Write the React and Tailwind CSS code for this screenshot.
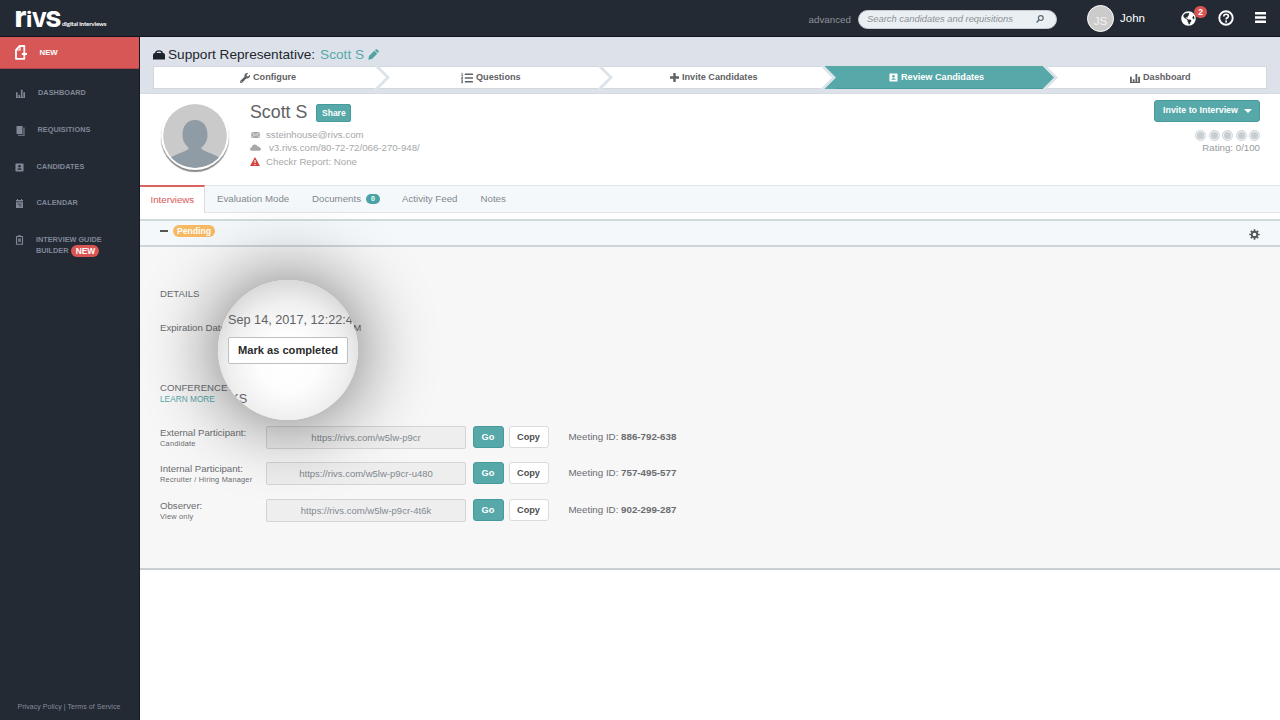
import { FaWrench, FaListOl, FaGlobeAmericas } from 'react-icons/fa';

function ChartIcon({ className }) {
  return (
    <svg viewBox="0 0 11 11" className={className} fill="currentColor">
      <path d="M0 4h2v6H0zM3 7h2v3H3zM6 1h2v9H6zM9 4h2v6H9zM0 10h11v1H0z" />
    </svg>
  );
}

function PersonIcon({ className, hole }) {
  return (
    <svg viewBox="0 0 10 10" className={className}>
      <rect x="0.5" y="0.5" width="9" height="9" rx="0.8" fill="currentColor" />
      <circle cx="5" cy="3.7" r="1.4" fill={hole} />
      <path d="M2.5 7.6c0-2.4 5-2.4 5 0z" fill={hole} />
    </svg>
  );
}

function PagesIcon({ className }) {
  return (
    <svg viewBox="0 0 9 10" className={className} fill="currentColor">
      <path d="M0.5 0h6v8h-6z" />
      <path d="M7.2 1.5h1.5V10H2V8.7h5.2z" opacity="0.7" />
    </svg>
  );
}

function CalendarIcon({ className }) {
  return (
    <svg viewBox="0 0 9 9" className={className} fill="currentColor">
      <path d="M1 1h1V0h1v1h3V0h1v1h1v1.5H1zM1 3.3h7V9H1z" />
      <path d="M2.5 5.2h4M4 7h2.5" stroke="#232a34" strokeWidth="0.7" />
    </svg>
  );
}

function ClipboardIcon({ className }) {
  return (
    <svg viewBox="0 0 8 10" className={className} fill="none" stroke="currentColor">
      <path d="M1 1.5h6v7.8H1z" strokeWidth="1.1" />
      <path d="M2.5 1h3M2.5 4.2h3M2.5 6h3" strokeWidth="1.3" />
    </svg>
  );
}

function NewIcon({ className }) {
  return (
    <svg viewBox="0 0 12 15" className={className} fill="none" stroke="currentColor" strokeWidth="1.8">
      <path d="M9.3 6.5V1H4.8L1 4.8v9h8.3v-2.3" strokeLinejoin="round" />
      <path d="M1 5h4V1" strokeWidth="1.2" />
      <path d="M6.8 9H12M9.3 6.6v4.8" strokeWidth="1.9" />
    </svg>
  );
}

function CaseIcon({ className }) {
  return (
    <svg viewBox="0 0 12 10" className={className}>
      <path d="M2.6 3.6Q2.8 0.9 6 0.9t3.4 2.7" fill="none" stroke="#1c222b" strokeWidth="1.3" />
      <path d="M0 5Q0 3 2 3h8q2 0 2 2v4.5H0z" fill="#1c222b" />
    </svg>
  );
}

function MailIcon({ className }) {
  return (
    <svg viewBox="0 0 10 7" className={className}>
      <rect width="10" height="7" fill="currentColor" />
      <path d="M0 0.4l5 3.4 5-3.4M0 6.7l3.5-3M10 6.7l-3.5-3" fill="none" stroke="#fff" strokeWidth="0.8" />
    </svg>
  );
}

function CloudIcon({ className }) {
  return (
    <svg viewBox="0 0 12 7" className={className} fill="currentColor">
      <path d="M2 7Q0 7 0 5.2T2 3.2Q2.3 0.3 5.2 0.3 7.6 0.3 8.3 2.3 9.8 2 10.3 3.6 12 3.9 12 5.4T10.3 7z" />
    </svg>
  );
}

function WarningIcon({ className }) {
  return (
    <svg viewBox="0 0 10 9" className={className}>
      <path d="M5 0L10 9H0z" fill="currentColor" />
      <path d="M5 2.9v3M5 6.9v1.2" stroke="#fff" strokeWidth="1.1" />
    </svg>
  );
}

function PencilIcon({ className }) {
  return (
    <svg viewBox="0 0 11 11" className={className} fill="currentColor">
      <path d="M0.3 10.7l.7-3.600L6.300 1.800l2.900 2.900-5.300 5.300zM6.900 1.200L7.700.5q.8-.7 1.500 0l1.300 1.300q.7.700 0 1.500l-.7.8z" />
    </svg>
  );
}

function PlusIcon({ className }) {
  return (
    <svg viewBox="0 0 9 9" className={className} fill="none" stroke="currentColor" strokeWidth="2.4">
      <path d="M4.5 0v9M0 4.5h9" />
    </svg>
  );
}

function GearIcon({ className }) {
  return (
    <svg viewBox="0 0 12 12" className={className} fill="none" stroke="currentColor">
      <circle cx="6" cy="6" r="3" strokeWidth="2" />
      <path d="M6 0.3v2M6 9.7v2M0.3 6h2M9.7 6h2M2 2l1.4 1.4M8.600 8.600L10 10M2 10l1.4-1.4M8.600 3.400L10 2" strokeWidth="1.9" />
    </svg>
  );
}

const NAV = [
  { label: 'DASHBOARD', icon: <ChartIcon className="w-[9px] h-[9px]" />, gap: 'pl-[38px]' },
  { label: 'REQUISITIONS', icon: <PagesIcon className="w-[9px] h-[10px]" />, gap: 'pl-[37.5px]' },
  { label: 'CANDIDATES', icon: <PersonIcon className="w-[9px] h-[9px]" hole="#232a34" />, gap: 'pl-[36.5px]' },
  { label: 'CALENDAR', icon: <CalendarIcon className="w-[9px] h-[9px]" />, gap: 'pl-[36.5px]' }
];

const LINKS = [
  { who: 'External Participant:', sub: 'Candidate', url: 'https://rivs.com/w5lw-p9cr', id: '886-792-638' },
  { who: 'Internal Participant:', sub: 'Recruiter / Hiring Manager', url: 'https://rivs.com/w5lw-p9cr-u480', id: '757-495-577' },
  { who: 'Observer:', sub: 'View only', url: 'https://rivs.com/w5lw-p9cr-4t6k', id: '902-299-287' }
];

function Logo() {
  return (
    <svg viewBox="0 0 100 36" className="ml-[15px] w-[100px] h-[36px] overflow-visible font-['Inter',sans-serif] font-extrabold" fill="#fff">
      <text transform="translate(-0.5 26.5) scale(1.35 1.36)" fontSize="21">r</text>
      <text x="11.3" y="26.5" fontSize="20.5">i</text>
      <text transform="translate(16.8 26.5) scale(0.96 1)" fontSize="20.5">V</text>
      <text transform="translate(30.5 26.5) scale(1.14 1.05)" fontSize="21">S</text>
      <text x="47" y="26" fontSize="6.2" textLength="44.5" className="font-['Lato',sans-serif] font-bold">digital interviews</text>
    </svg>
  );
}

function Header() {
  return (
    <header className="h-[37px] shrink-0 bg-[#232a34] border-b border-[#0f141c] flex items-center text-white">
      <Logo />
      <span className="ml-auto text-[9.8px] leading-[12px] text-[#8d9298] pt-[4px]">advanced</span>
      <div className="ml-[7px] w-[199px] h-[19px] mt-[2px] rounded-full bg-[#e9eff2] border border-[#c7ccd1] flex items-center pl-2 pr-3">
        <span className="italic text-[9.4px] text-[#8b9096] whitespace-nowrap">Search candidates and requisitions</span>
        <svg viewBox="0 0 8 8" className="ml-auto w-2 h-2" fill="none" stroke="#5c6b78">
          <circle cx="4.8" cy="3.1" r="2.4" strokeWidth="1.2" />
          <path d="M3 5L0.6 7.5" strokeWidth="1.5" />
        </svg>
      </div>
      <div className="ml-[30px] w-[27px] h-[27px] rounded-full bg-[#cbcbcb] border border-[#fff] text-[11.5px] leading-[31px] text-center text-[#f3f3f3]">JS</div>
      <span className="ml-[6px] text-[11.5px] w-[61px] pt-[1px]">John</span>
      <div className="relative w-[15px] h-[15px] mt-[1px]">
        <FaGlobeAmericas className="w-[15px] h-[15px]" />
        <span className="absolute left-[13px] -top-[5px] w-[13px] h-[12px] rounded-full bg-[#d85552] text-[8.5px] leading-[12px] font-bold text-center">2</span>
      </div>
      <svg viewBox="0 0 16 16" className="ml-[22px] w-[16px] h-[16px]" fill="none" stroke="#fff">
        <circle cx="8" cy="8" r="6.7" strokeWidth="1.9" />
        <path d="M5.8 6.5c0-3 4.6-2.9 4.6-.3 0 1.6-2.3 1.6-2.3 3.2M8.1 10.6v1.8" strokeWidth="1.7" />
      </svg>
      <svg viewBox="0 0 11 11" className="ml-[21px] mr-[14px] w-[11px] h-[11px] -mt-[2px]" fill="#fff">
        <path d="M0 0h11v2.5H0zM0 4.2h11v2.5H0zM0 8.4h11v2.5H0z" />
      </svg>
    </header>
  );
}

function Sidebar() {
  return (
    <aside className="w-[140px] shrink-0 bg-[#232a34] border-r border-[#161c25] flex flex-col text-[#808898]">
      <div className="h-[32px] bg-[#d65755] border-b border-[#a94649] flex items-center text-white">
        <NewIcon className="ml-[15px] w-[12px] h-[15px]" />
        <span className="ml-[12.5px] mt-[1px] text-[7.8px] font-bold">NEW</span>
      </div>
      <div className="pt-[6.5px]">
        {NAV.map((item) => (
          <div key={item.label} className={`grid h-[36.7px] items-center ${item.gap}`}>
            <div className="flex items-center text-[7.3px] font-bold tracking-[0.05px]">
              <span className="-ml-[22px] w-[22px]">{item.icon}</span>
              {item.label}
            </div>
          </div>
        ))}
      </div>
      <div className="flex pl-[15px] pt-[12px] text-[7.3px] leading-[12px] font-bold">
        <ClipboardIcon className="w-[9px] h-[10px] mt-[1px]" />
        <div className="ml-[12px]">
          <div className="h-[11px]">INTERVIEW GUIDE</div>
          <div className="flex items-center">
            BUILDER
            <span className="ml-[3px] w-[28px] h-[12px] rounded-full bg-[#d85552] text-white text-[8.4px] text-center">NEW</span>
          </div>
        </div>
      </div>
      <div className="mt-auto pb-[8px] pl-[17.5px] text-[7px] leading-[10px] tracking-[0.05px] text-[#858c99]">Privacy Policy | Terms of Service</div>
    </aside>
  );
}

// arrow shaped edge between two steps of the progress bar
function StepEdge({ left, right }) {
  return (
    <svg viewBox="0 0 15 23" className="w-[15px] h-[23px] shrink-0">
      <rect width="15" height="23" fill={right} />
      {right === '#fff' && <path d="M0 0.5h15M0 22.5h15" stroke="#d2d8dd" />}
      <path d="M0 0h1L12.5 11.5 1 23H0z" fill={left} />
      <path d="M1 -0.5L13 11.5 1 23.5" fill="none" stroke="#dde3ea" strokeWidth="2.8" />
    </svg>
  );
}

function Steps() {
  return (
    <div className="mx-[13px] h-[23px] flex items-center text-[9.15px] font-bold text-[#5f6164] whitespace-nowrap">
      <div className="w-[222px] h-[23px] bg-white border-y border-l border-[#d2d8dd] flex items-center pl-[86px]">
        <FaWrench className="w-[10px] h-[10px] mr-[3px]" />Configure
      </div>
      <StepEdge left="#fff" right="#fff" />
      <div className="w-[208px] h-[23px] bg-white border-y border-[#d2d8dd] flex items-center pl-[71px]">
        <FaListOl className="w-[12px] h-[12px] mr-[3px]" />Questions
      </div>
      <StepEdge left="#fff" right="#fff" />
      <div className="w-[208px] h-[23px] bg-white border-y border-[#d2d8dd] flex items-center pl-[57px]">
        <PlusIcon className="w-[9px] h-[9px] mr-[3px]" />Invite Candidates
      </div>
      <StepEdge left="#fff" right="#56a8a9" />
      <div className="w-[207px] h-[23px] bg-[#56a8a9] border-y border-t-[#56a8a9] border-b-[#489b9c] text-white flex items-center pl-[53px]">
        <PersonIcon className="w-[9px] h-[9px] mr-[3px]" hole="#56a8a9" />Review Candidates
      </div>
      <StepEdge left="#56a8a9" right="#fff" />
      <div className="grow h-[23px] bg-white border-y border-r border-[#d2d8dd] flex items-center pl-[72px]">
        <ChartIcon className="w-[10px] h-[10px] mr-[3px]" />Dashboard
      </div>
    </div>
  );
}

function Profile() {
  return (
    <section className="h-[91px] flex text-[#a6a8aa]">
      <div className="ml-[21px] mt-[8px] w-[68px] h-[68px] shrink-0 rounded-full bg-white shadow-[0_2px_1px_#888] p-[2px]">
        <svg viewBox="0 0 64 64" className="w-[64px] h-[64px] rounded-full">
          <circle cx="32" cy="32" r="32" fill="#cacaca" />
          <path d="M19.5 31c0-9.5 5-15 12.5-15s12.5 5.5 12.5 15c0 6-3 10-6 12.5v1.5c4 3 10 4 18 8.5Q47 64 32 64T7.5 53.5c8-4.5 14-5.5 18-8.5v-1.5c-3-2.5-6-6.5-6-12.5z" fill="#8f9ba5" />
        </svg>
      </div>
      <div className="ml-[21px] pt-[9px]">
        <div className="flex items-center h-[19px]">
          <span className="text-[17.8px] text-[#606265]">Scott S</span>
          <span className="ml-[9px] w-[35px] h-[18px] rounded-[2px] bg-[#56a8a9] border border-[#489b9c] text-white text-[8.5px] leading-[16px] font-bold text-center">Share</span>
        </div>
        <div className="mt-[6px] text-[9.7px] leading-[13.3px] whitespace-nowrap">
          <div className="flex items-center"><MailIcon className="w-[9px] h-[6px] ml-[1px] mr-[6px]" />ssteinhouse@rivs.com</div>
          <div className="flex items-center"><CloudIcon className="w-[11px] h-[7px] mr-[8px]" />v3.rivs.com/80-72-72/066-270-948/</div>
          <div className="flex items-center"><WarningIcon className="w-[10px] h-[9px] mr-[6px] text-[#d6423e]" />Checkr Report: None</div>
        </div>
      </div>
      <div className="ml-auto mr-[20px] pt-[6px] flex flex-col items-end">
        <div className="w-[106px] h-[22px] rounded-[3px] bg-[#56a8a9] border border-[#489b9c] text-white text-[8.9px] font-bold flex items-center pl-2">
          Invite to Interview
          <span className="ml-[6px] border-x-4 border-x-transparent border-t-4 border-t-white" />
        </div>
        <div className="flex gap-[2.5px] mt-[8px]">
          {[1, 2, 3, 4, 5].map((n) => (
            <span key={n} className="w-[11px] h-[11px] rounded-full border border-[#ced5d8] bg-[#eef1f2] p-[1px]">
              <span className="block w-[7px] h-[7px] rounded-full bg-[#c6ced2]" />
            </span>
          ))}
        </div>
        <span className="mt-[1px] text-[9.7px] leading-[12px] text-[#979b9e]">Rating: 0/100</span>
      </div>
    </section>
  );
}

function Tabs() {
  return (
    <nav className="h-[28px] bg-[#f4f8fa] border-y border-[#dfe5e9] flex text-[9.7px] leading-[26px] text-[#83898f] whitespace-nowrap">
      <span className="w-[65px] -mt-px h-[28px] bg-white border-t-2 border-r border-t-[#dc625f] border-r-[#d8dfe3] pl-[10.5px] leading-[25px] text-[#d65755]">Interviews</span>
      <span className="pl-[12px] w-[95px]">Evaluation Mode</span>
      <span className="pl-[12px] w-[90px] flex items-center">
        Documents
        <span className="ml-[5px] w-[14px] h-[10px] rounded-full bg-[#4aa3a5] text-white font-bold text-[7px] leading-[10px] text-center">0</span>
      </span>
      <span className="pl-[12px] w-[78px]">Activity Feed</span>
      <span className="pl-[12.5px]">Notes</span>
    </nav>
  );
}

// magnifier over the expiration date, its content is drawn larger
function Lens() {
  return (
    <div className="absolute left-[77.5px] top-[33px] w-[140px] h-[140px] rounded-full shadow-[0_0_70px_8px_rgba(0,0,0,0.46)]">
      <div className="w-full h-full rounded-full overflow-hidden bg-[radial-gradient(circle_at_50%_58%,#fff_0%,#fdfdfd_28%,#efefef_55%,#d4d4d4_80%)] text-[12.7px] leading-[14px] text-[#606265] pt-[33px] pl-[10.5px] whitespace-nowrap">
        <div>Sep 14, 2017, 12:22:45 PM</div>
        <div className="mt-[10px] w-[120px] h-[27px] rounded-[2px] border border-[#bfbfbf] bg-white text-[#2b2b2b] text-[11.1px] leading-[25px] font-bold text-center">Mark as completed</div>
        <div className="mt-[28px] -ml-[17.5px] text-[12.7px]">LINKS</div>
      </div>
    </div>
  );
}

function Interview() {
  return (
    <section className="relative h-[323px] bg-[#f7f7f7] border-b-2 border-[#c8ced2] pl-[20px] text-[9.65px] text-[#6a6c70]">
      <Lens />
      <div className="pt-[41px] leading-[12px]">DETAILS</div>
      <div className="pt-[22px] leading-[12px] flex">
        <span className="w-[84px]">Expiration Date:</span>
        <span className="whitespace-nowrap">Sep 14, 2017, 12:22:45 PM</span>
      </div>
      <div className="pt-[48px] leading-[12px]">CONFERENCE LINKS</div>
      <div className="leading-[11px] text-[8.3px] text-[#56a8a9]">LEARN MORE</div>
      <div className="pt-[20.6px]">
        {LINKS.map((link) => (
          <div key={link.id} className="flex h-[36.7px] items-start">
            <div className="w-[106px] leading-[11px] pt-[1px]">
              <div>{link.who}</div>
              <div className="text-[7.4px] tracking-[0.22px] whitespace-nowrap">{link.sub}</div>
            </div>
            <div className="w-[200px] h-[23px] rounded-[2px] border border-[#d2d4d5] bg-[#eee] leading-[21px] text-[9.5px] text-center text-[#828991]">{link.url}</div>
            <div className="ml-[6.5px] w-[31px] h-[22px] rounded-[3px] border border-[#489b9c] bg-[#56a8a9] text-white font-bold text-[9.2px] leading-[20px] text-center">Go</div>
            <div className="ml-[5px] w-[40px] h-[22px] rounded-[3px] border border-[#d9dbdc] bg-white text-[#4c4e50] font-bold text-[9.2px] leading-[20px] text-center">Copy</div>
            <div className="ml-[20px] leading-[22px] text-[9.75px]">Meeting ID: <b>{link.id}</b></div>
          </div>
        ))}
      </div>
    </section>
  );
}

function App() {
  return (
    <div className="w-[1280px] h-[720px] overflow-hidden flex flex-col bg-white font-['Liberation_Sans',sans-serif]">
      <Header />
      <div className="flex grow">
        <Sidebar />
        <main className="grow">
          <div className="h-[57px] bg-[#dde2ea] border-b border-[#d3dae0] pt-[8px]">
            <div className="h-[21px] pl-[13px] flex items-center text-[13.65px] text-[#22272d] whitespace-nowrap">
              <CaseIcon className="w-[12px] h-[10px] mr-[3px] -mt-[2px]" />
              <span className="-mt-[1px]">Support Representative:</span>
              <span className="ml-[5px] -mt-[1px] text-[#56a8a9]">Scott S</span>
              <PencilIcon className="ml-[4px] -mt-[2px] w-[11px] h-[11px] text-[#4fa3a4]" />
            </div>
            <Steps />
          </div>
          <Profile />
          <Tabs />
          <div className="mt-[6px] h-[28px] bg-[#f4f8fa] border-t-2 border-b-2 border-t-[#d1d9dd] border-b-[#ccd5db] flex items-center">
            <span className="ml-[20px] w-[8px] h-[2px] bg-[#555] -mt-[5px]" />
            <span className="ml-[5px] w-[42px] h-[12px] -mt-[4px] rounded-full bg-[#f8b964] text-white font-bold text-[8.6px] leading-[12px] text-center">Pending</span>
            <GearIcon className="ml-auto mr-[20px] mt-[2px] w-[11px] h-[11px] text-[#55585b]" />
          </div>
          <Interview />
        </main>
      </div>
    </div>
  );
}

export default App;
